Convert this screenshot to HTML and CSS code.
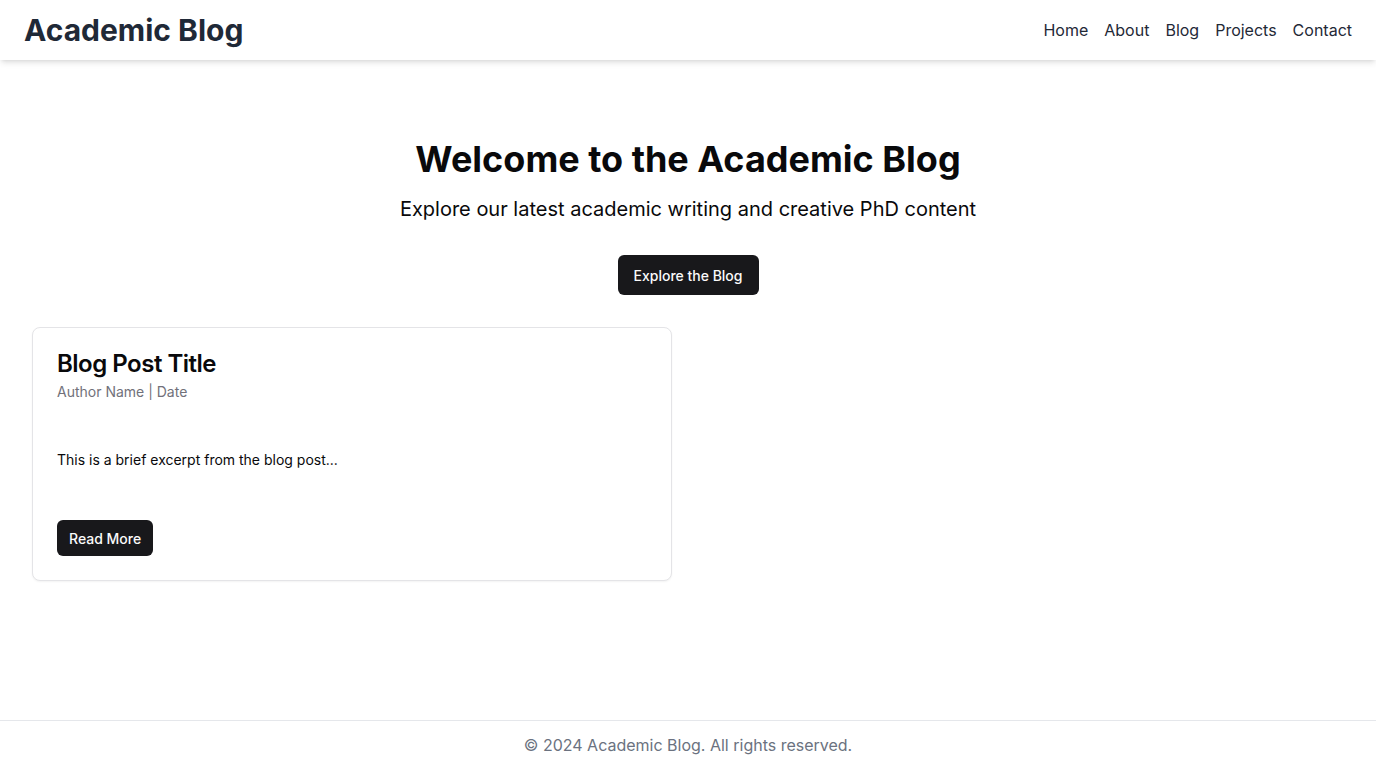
FILE: index.html
```html
<!DOCTYPE html>
<html lang="en">
<head>
<meta charset="utf-8">
<title>Academic Blog</title>
<link rel="stylesheet" href="styles.css">
</head>
<body>
<div class="page">
  <header class="site-header">
    <div class="logo">Academic Blog</div>
    <nav class="nav">
      <a href="#">Home</a>
      <a href="#">About</a>
      <a href="#">Blog</a>
      <a href="#">Projects</a>
      <a href="#">Contact</a>
    </nav>
  </header>
  <main class="main">
    <section class="hero">
      <h1 class="hero-title">Welcome to the Academic Blog</h1>
      <p class="hero-sub">Explore our latest academic writing and creative PhD content</p>
      <a class="btn btn-lg" href="#">Explore the Blog</a>
    </section>
    <section class="posts">
      <article class="card">
        <div class="card-header">
          <h2 class="card-title">Blog Post Title</h2>
          <p class="card-desc">Author Name | Date</p>
        </div>
        <div class="card-content">
          <p>This is a brief excerpt from the blog post...</p>
        </div>
        <div class="card-footer">
          <a class="btn btn-sm" href="#">Read More</a>
        </div>
      </article>
    </section>
  </main>
  <footer class="site-footer">© 2024 Academic Blog. All rights reserved.</footer>
</div>
</body>
</html>
```

FILE: styles.css
```css
* { box-sizing: border-box; }
html, body { margin: 0; padding: 0; }
body {
  font-family: Inter, "Noto Sans", sans-serif;
  color: #09090b;
  background: #fff;
}
a { text-decoration: none; }
.page {
  min-height: 100vh;
  display: flex;
  flex-direction: column;
}
.site-header {
  height: 60px;
  display: flex;
  align-items: center;
  justify-content: space-between;
  padding: 0 24px 0 24px;
  background: #fff;
  box-shadow: 0 4px 6px -1px rgba(0,0,0,0.1), 0 2px 4px -2px rgba(0,0,0,0.1);
  position: relative;
  z-index: 1;
}
.logo {
  font-size: 30px;
  line-height: 36px;
  font-weight: 700;
  color: #1f2937;
}
.nav {
  display: flex;
  gap: 16px;
}
.nav a {
  font-size: 16px;
  line-height: 24px;
  color: #1f2937;
}
.main {
  flex: 1;
  padding: 79px 32px 32px;
}
.hero {
  display: flex;
  flex-direction: column;
  align-items: center;
  text-align: center;
}
.hero-title {
  margin: 0;
  font-size: 36px;
  line-height: 40px;
  font-weight: 700;
}
.hero-sub {
  margin: 16px 0 0;
  font-size: 20px;
  line-height: 28px;
}
.btn {
  display: inline-flex;
  align-items: center;
  justify-content: center;
  background: #18181b;
  color: #fafafa;
  font-size: 14px;
  font-weight: 500;
  border-radius: 6px;
}
.btn-lg {
  margin-top: 32px;
  height: 40px;
  padding: 0 16px;
}
.btn-sm {
  height: 36px;
  padding: 0 12px;
}
.posts {
  margin-top: 32px;
  display: grid;
  grid-template-columns: 1fr 1fr;
  gap: 32px;
}
.card {
  border: 1px solid #e4e4e7;
  border-radius: 8px;
  background: #fff;
  box-shadow: 0 1px 2px rgba(0,0,0,0.05);
}
.card-header {
  padding: 24px 24px 0;
  display: flex;
  flex-direction: column;
  gap: 6px;
}
.card-title {
  margin: 0;
  font-size: 24px;
  line-height: 24px;
  font-weight: 600;
  letter-spacing: -0.5px;
}
.card-desc {
  margin: 0;
  font-size: 14px;
  line-height: 20px;
  color: #71717a;
}
.card-content {
  padding: 48px 24px 50px;
}
.card-content p {
  margin: 0;
  font-size: 14px;
  line-height: 20px;
}
.card-footer {
  padding: 0 24px 24px;
  display: flex;
}
.site-footer {
  border-top: 1px solid #e5e7eb;
  padding: 12px 0 11px;
  text-align: center;
  font-size: 16px;
  line-height: 24px;
  color: #6b7280;
}
```
